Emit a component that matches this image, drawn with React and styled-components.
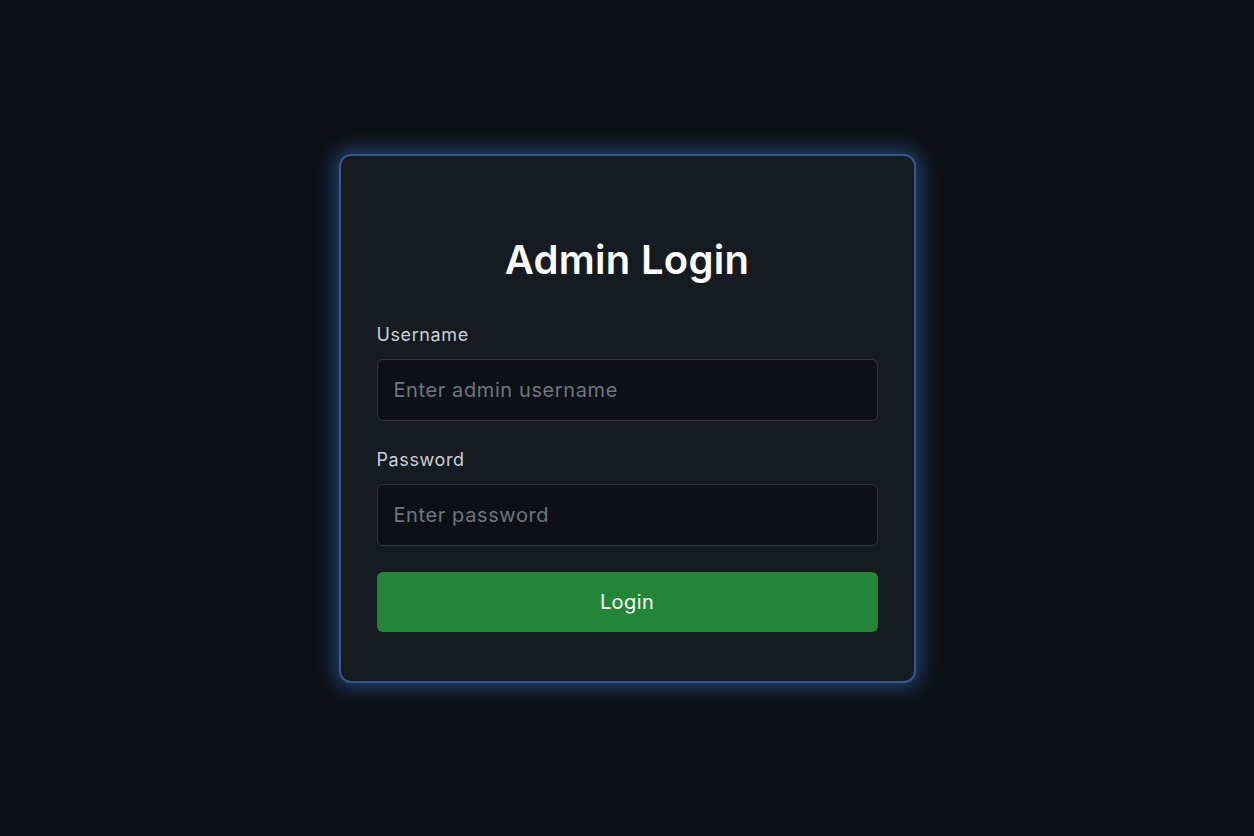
import styled, { createGlobalStyle } from 'styled-components';

const GlobalStyle = createGlobalStyle`
  html, body {
    margin: 0;
    padding: 0;
    background: #0d1117;
  }
  * {
    box-sizing: border-box;
  }
`;

function App() {
  return (
    <>
      <GlobalStyle />
      <Page>
        <Card>
          <Title>Admin Login</Title>
          <Form onSubmit={(e) => e.preventDefault()}>
            <Field>
              <Label htmlFor="username">Username</Label>
              <Input id="username" type="text" placeholder="Enter admin username" />
            </Field>
            <Field>
              <Label htmlFor="password">Password</Label>
              <Input id="password" type="password" placeholder="Enter password" />
            </Field>
            <LoginButton type="submit">Login</LoginButton>
          </Form>
        </Card>
      </Page>
    </>
  );
}

export default App;

const Page = styled.div`
  width: 100%;
  height: 836px;
  background: #0d1117;
  display: flex;
  align-items: center;
  justify-content: center;
  font-family: Inter, "Noto Sans", sans-serif;
`;

const Card = styled.div`
  width: 577px;
  padding: 80px 36px 49px;
  background: #161b22;
  border: 2px solid #36598c;
  border-radius: 12px;
  box-shadow: 0 0 20px 4px rgba(58, 120, 210, 0.5);
`;

const Title = styled.h1`
  margin: 0 0 39px;
  text-align: center;
  color: #ffffff;
  font-size: 40px;
  font-weight: 600;
  line-height: 48px;
  letter-spacing: 0.3px;
`;

const Form = styled.form`
  display: flex;
  flex-direction: column;
`;

const Field = styled.div`
  display: flex;
  flex-direction: column;
  margin-bottom: 27px;
`;

const Label = styled.label`
  color: #c9d1d9;
  font-size: 18px;
  font-weight: 400;
  line-height: 24px;
  letter-spacing: 0.6px;
  margin-bottom: 12px;
`;

const Input = styled.input`
  width: 100%;
  height: 62px;
  padding: 0 16px;
  background: #0d1117;
  border: 1px solid #30363d;
  border-radius: 6px;
  color: #c9d1d9;
  font-family: inherit;
  font-size: 20px;
  letter-spacing: 0.6px;
  outline: none;

  &::placeholder {
    color: #6e7681;
  }
`;

const LoginButton = styled.button`
  width: 100%;
  height: 60px;
  margin-top: -1px;
  background: #238636;
  border: none;
  border-radius: 6px;
  color: #ffffff;
  font-family: inherit;
  font-size: 20px;
  font-weight: 400;
  letter-spacing: 0.4px;
  cursor: pointer;
`;
